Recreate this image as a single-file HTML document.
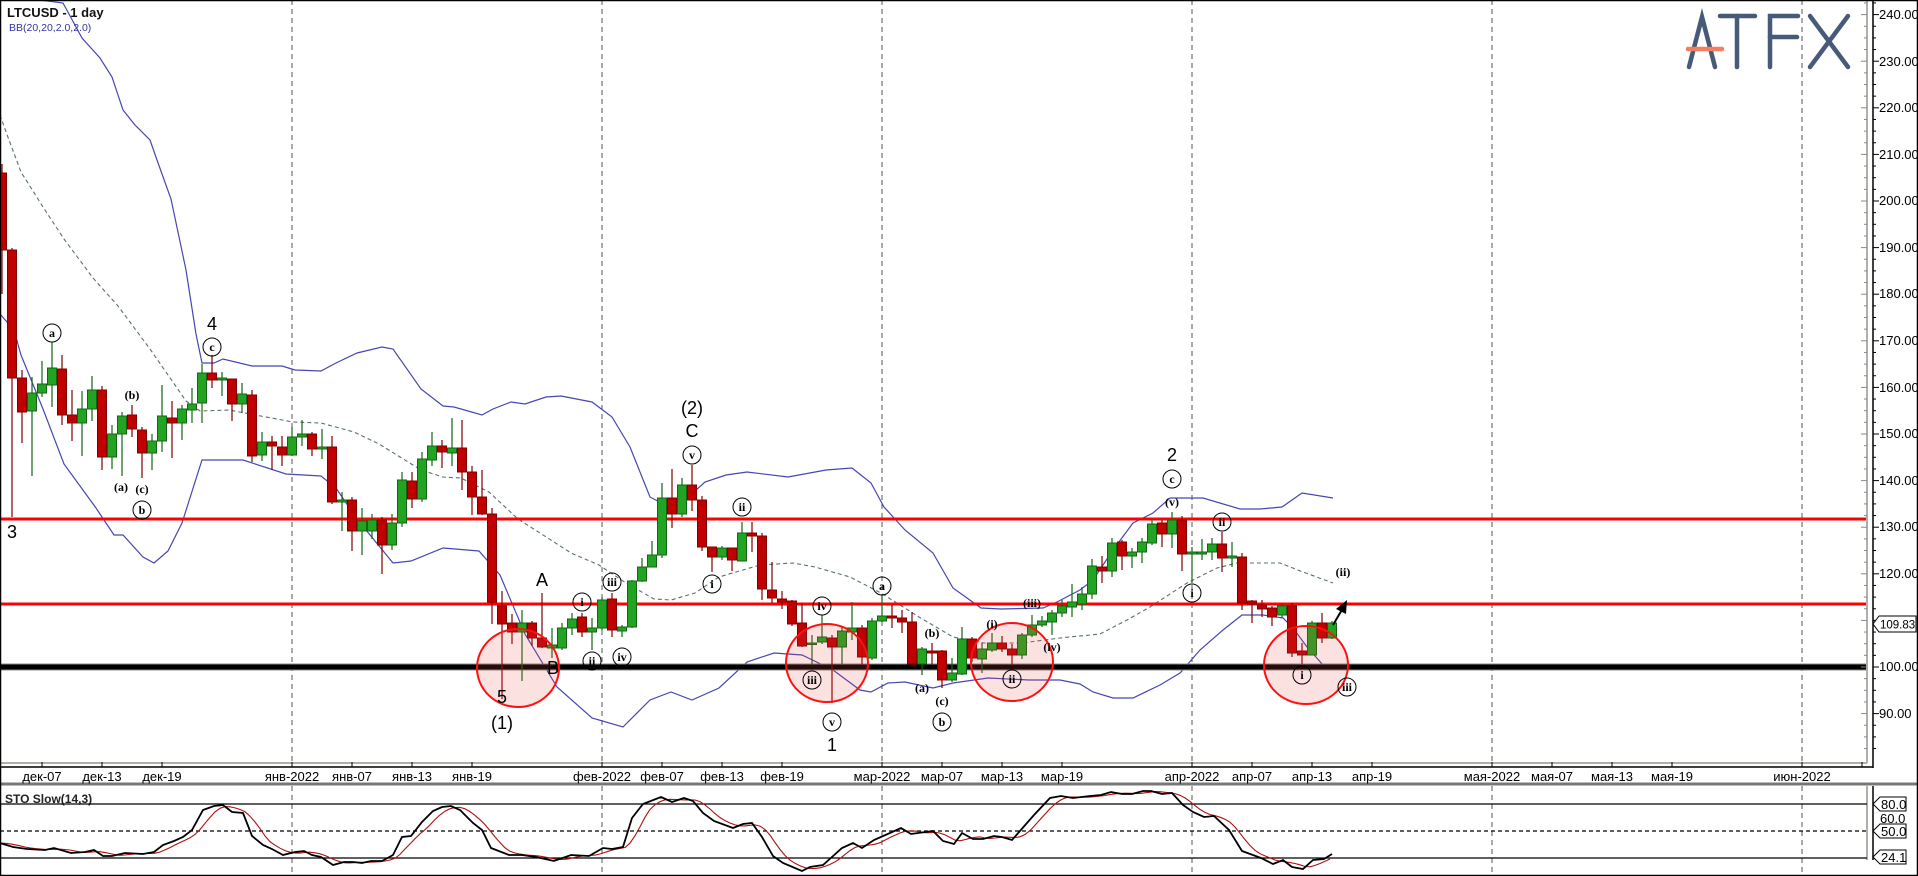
<!DOCTYPE html>
<html><head><meta charset="utf-8"><style>
html,body{margin:0;padding:0;background:#fff;}
svg{display:block;}
.ax{font-family:"Liberation Sans",sans-serif;font-size:13px;fill:#000;}
.wl{font-family:"Liberation Sans",sans-serif;font-size:18px;fill:#000;text-anchor:middle;}
.cl{font-family:"Liberation Serif",serif;font-size:12px;font-weight:bold;fill:#000;text-anchor:middle;}
</style></head><body>
<svg id="s" width="1918" height="876" viewBox="0 0 1918 876" xmlns="http://www.w3.org/2000/svg">
<rect x="0" y="0" width="1918" height="876" fill="#fff"/>
<g id="grid" stroke="#555" stroke-dasharray="5,4" stroke-width="1">
<line x1="292" y1="0" x2="292" y2="763"/><line x1="602" y1="0" x2="602" y2="763"/><line x1="882" y1="0" x2="882" y2="763"/><line x1="1192" y1="0" x2="1192" y2="763"/><line x1="1492" y1="0" x2="1492" y2="763"/><line x1="1802" y1="0" x2="1802" y2="763"/>
<line x1="292" y1="786" x2="292" y2="875"/><line x1="602" y1="786" x2="602" y2="875"/><line x1="882" y1="786" x2="882" y2="875"/><line x1="1192" y1="786" x2="1192" y2="875"/><line x1="1492" y1="786" x2="1492" y2="875"/><line x1="1802" y1="786" x2="1802" y2="875"/>
</g>
<g stroke="#475a78" stroke-width="4.5" stroke-linecap="round" fill="none">
<polyline points="1689,67 1702,17 1715,67"/>
<line x1="1720" y1="16" x2="1755" y2="16"/><line x1="1737" y1="16" x2="1737" y2="67"/>
<polyline points="1798,16 1770,16 1770,67"/><line x1="1770" y1="37" x2="1797" y2="37"/>
<line x1="1810" y1="16" x2="1848" y2="67"/><line x1="1848" y1="16" x2="1810" y2="67"/>
</g>
<line x1="1688" y1="49" x2="1722" y2="49" stroke="#f08060" stroke-width="4.5" stroke-linecap="round"/>
<g id="bands" fill="none"></g>
<line x1="0" y1="519" x2="1867" y2="519" stroke="#ff0000" stroke-width="3"/>
<line x1="0" y1="604" x2="1867" y2="604" stroke="#ff0000" stroke-width="3"/>
<line x1="0" y1="667" x2="1867" y2="667" stroke="#888" stroke-width="7"/>
<line x1="0" y1="667" x2="1867" y2="667" stroke="#000" stroke-width="5"/>
<g id="candles"></g>
<g fill="rgba(235,70,70,0.16)" stroke="#ff1010" stroke-width="2">
<ellipse cx="518" cy="668" rx="41" ry="39"/>
<ellipse cx="827" cy="663" rx="41" ry="39"/>
<ellipse cx="1012" cy="662" rx="41" ry="39"/>
<ellipse cx="1306" cy="665" rx="42" ry="39"/>
</g>
<line x1="1333" y1="625" x2="1343" y2="608" stroke="#000" stroke-width="2"/>
<polygon points="1347,600 1336,609 1346,614" fill="#000"/>
<g class="wl">
<text x="12" y="538">3</text><text x="212" y="330">4</text>
<text x="542" y="586">A</text><text x="553" y="674">B</text>
<text x="502" y="703">5</text><text x="502" y="729">(1)</text>
<text x="692" y="414">(2)</text><text x="692" y="437">C</text>
<text x="832" y="751">1</text><text x="1172" y="461">2</text>
</g>
<g class="cl" id="circ"></g>
<g class="cl">
<text x="132" y="399">(b)</text><text x="121" y="491">(a)</text><text x="142" y="493">(c)</text>
<text x="932" y="637">(b)</text><text x="922" y="692">(a)</text><text x="942" y="705">(c)</text>
<text x="992" y="628">(i)</text><text x="1032" y="607">(iii)</text><text x="1052" y="651">(iv)</text>
<text x="1172" y="506">(v)</text><text x="1343" y="576">(ii)</text>
</g>
<text x="7" y="17" font-family="Liberation Sans,sans-serif" font-size="13" font-weight="bold" fill="#111">LTCUSD - 1 day</text>
<text x="9" y="31" font-family="Liberation Sans,sans-serif" font-size="10.5" fill="#3333aa">BB(20,20,2.0,2.0)</text>
<line x1="0" y1="763" x2="1867" y2="763" stroke="#b0b0a8" stroke-width="2"/>
<line x1="1867" y1="0" x2="1867" y2="763" stroke="#b0b0a8" stroke-width="2"/>
<line x1="1867" y1="786" x2="1867" y2="860" stroke="#b0b0a8" stroke-width="2"/>
<line x1="1873" y1="0" x2="1873" y2="768" stroke="#000" stroke-width="1.5"/>
<line x1="1873" y1="786" x2="1873" y2="860" stroke="#000" stroke-width="1.5"/>
<line x1="0" y1="767" x2="1873" y2="767" stroke="#000" stroke-width="1.5"/>
<line x1="0" y1="784" x2="1918" y2="784" stroke="#777" stroke-width="3"/>
<rect x="0.5" y="0.5" width="1917" height="875" fill="none" stroke="#000" stroke-width="1.5"/>
<g id="ticks" stroke="#000" stroke-width="1"></g>
<g class="ax" text-anchor="middle">
<text x="42" y="781">дек-07</text><text x="102" y="781">дек-13</text><text x="162" y="781">дек-19</text>
<text x="292" y="781">янв-2022</text><text x="352" y="781">янв-07</text><text x="412" y="781">янв-13</text><text x="472" y="781">янв-19</text>
<text x="602" y="781">фев-2022</text><text x="662" y="781">фев-07</text><text x="722" y="781">фев-13</text><text x="782" y="781">фев-19</text>
<text x="882" y="781">мар-2022</text><text x="942" y="781">мар-07</text><text x="1002" y="781">мар-13</text><text x="1062" y="781">мар-19</text>
<text x="1192" y="781">апр-2022</text><text x="1252" y="781">апр-07</text><text x="1312" y="781">апр-13</text><text x="1372" y="781">апр-19</text>
<text x="1492" y="781">мая-2022</text><text x="1552" y="781">мая-07</text><text x="1612" y="781">мая-13</text><text x="1672" y="781">мая-19</text>
<text x="1802" y="781">июн-2022</text>
</g>
<g class="ax" id="plab">
<text x="1879" y="19">240.00</text><text x="1879" y="66">230.00</text><text x="1879" y="112">220.00</text><text x="1879" y="159">210.00</text><text x="1879" y="205">200.00</text><text x="1879" y="252">190.00</text><text x="1879" y="298">180.00</text><text x="1879" y="345">170.00</text><text x="1879" y="392">160.00</text><text x="1879" y="438">150.00</text><text x="1879" y="485">140.00</text><text x="1879" y="531">130.00</text><text x="1879" y="578">120.00</text><text x="1879" y="671">100.00</text><text x="1879" y="718">90.00</text>
</g>
<polygon points="1873,624 1879,616 1916,616 1916,632 1879,632" fill="#fff" stroke="#000"/>
<text x="1880" y="628.5" font-family="Liberation Sans,sans-serif" font-size="11.5" fill="#000">109.83</text>
<text x="5" y="803" font-family="Liberation Sans,sans-serif" font-size="12" font-weight="bold" fill="#222">STO Slow(14,3)</text>
<line x1="0" y1="804" x2="1867" y2="804" stroke="#000" stroke-width="1.2"/>
<line x1="0" y1="831" x2="1867" y2="831" stroke="#000" stroke-width="1.2" stroke-dasharray="4,3"/>
<line x1="0" y1="858" x2="1867" y2="858" stroke="#000" stroke-width="1.2"/>
<g id="sto" fill="none"></g>
<text x="1880" y="823" class="ax" font-size="12">60.0</text>
<polygon points="1873,804 1880,797 1906,797 1906,811 1880,811" fill="#fff" stroke="#000"/>
<text x="1881" y="809" class="ax" font-size="12">80.0</text>
<polygon points="1873,831 1880,824 1906,824 1906,838 1880,838" fill="#fff" stroke="#000"/>
<text x="1881" y="836" class="ax" font-size="12">50.0</text>
<polygon points="1873,857 1880,850 1906,850 1906,864 1880,864" fill="#fff" stroke="#000"/>
<text x="1881" y="862" class="ax" font-size="12">24.1</text>
</svg>
<script>
var NS="http://www.w3.org/2000/svg";
function el(p,t,a){var e=document.createElementNS(NS,t);for(var k in a)e.setAttribute(k,a[k]);p.appendChild(e);return e;}
var C=[[173,250,164,294,0],[250,378,248,517,0],[378,412,370,443,0],[393,411,377,476,1],[384,393,361,397,1],[368,385,342,407,1],[369,415,355,425,0],[415,423,390,441,0],[409,423,391,456,1],[390,409,376,421,1],[390,457,386,470,0],[434,457,425,469,1],[416,434,412,476,1],[415,429,405,437,0],[430,453,427,478,0],[441,453,434,470,1],[416,441,385,452,1],[418,423,401,458,0],[409,423,405,440,1],[404,410,388,423,1],[373,403,364,423,1],[373,380,355,388,0],[378,380,372,396,1],[379,404,379,421,0],[394,404,383,413,1],[395,456,390,462,0],[442,455,432,461,1],[442,446,436,470,0],[447,455,436,466,0],[437,455,427,456,1],[434,437,420,446,1],[434,449,432,456,0],[447,449,429,459,1],[447,502,436,504,0],[500,502,492,531,1],[500,531,497,551,0],[521,531,508,555,1],[520,531,514,539,1],[520,545,517,574,0],[523,545,514,550,1],[480,523,472,527,1],[481,499,472,508,0],[459,499,452,502,1],[446,460,432,466,1],[446,452,440,468,0],[448,453,418,466,1],[448,472,420,490,0],[472,497,466,515,0],[497,514,470,515,0],[514,602,508,624,0],[606,624,591,699,0],[623,632,614,644,0],[623,632,610,681,1],[623,638,621,646,0],[638,647,593,648,0],[645,648,628,658,1],
[628,648,623,650,1],[619,628,613,635,1],[617,632,613,637,0],[628,632,618,650,1],[600,628,597,630,1],[599,630,593,637,0],[627,631,625,637,1],[581,627,580,628,1],[567,581,558,582,1],[555,567,541,567,1],[498,555,483,558,1],[498,514,469,528,0],[485,514,478,517,1],[485,500,465,511,0],[500,547,496,551,0],[547,557,547,572,0],[548,557,546,560,1],[548,560,548,571,0],[533,561,522,561,1],[533,536,522,552,0],[536,589,533,600,0],[590,598,562,603,0],[599,602,591,609,0],[601,624,600,626,0],[623,646,603,647,0],[643,644,635,665,1],[637,642,615,644,1],[638,647,635,703,0],[631,647,627,664,1],[628,632,602,640,1],[628,657,625,665,0],[621,658,618,660,1],[616,621,595,622,1],[616,618,605,628,0],[618,622,610,633,0],[622,664,612,667,0],[649,664,647,675,1],[651,653,643,665,0],[651,680,650,688,0],[673,680,658,682,1],[639,674,627,675,1],[639,658,637,662,0],[649,659,643,673,1],[643,650,633,652,1],[643,649,636,652,0],[649,655,644,665,0],[635,655,633,659,1],[625,635,615,637,1],[621,625,616,627,1],[613,622,610,635,1],[606,613,600,617,1],
[602,607,584,617,1],[594,604,587,610,1],[566,594,559,599,1],[567,571,556,583,0],[543,571,538,577,1],[542,556,540,570,0],[552,556,548,568,1],[542,552,538,563,1],[524,543,520,545,1],[523,534,520,547,0],[520,534,512,548,1],[520,554,516,571,0],[552,554,547,583,1],[552,554,539,560,1],[544,552,538,560,1],[544,558,532,572,0],[556,558,542,567,1],[557,603,553,610,0],[601,604,600,623,0],[605,609,600,617,0],[608,617,606,626,0],[606,615,603,618,1],[606,653,603,657,0],[651,655,643,664,0],[623,655,621,655,1],[623,638,613,643,0],[623,638,621,639,1]];
var g=document.getElementById('candles');
C.forEach(function(c,k){var x=2+10*k;var fc=c[4]?'#22a422':'#c00000',sc=c[4]?'#146414':'#800000';
el(g,'line',{x1:x,y1:c[2],x2:x,y2:c[3],stroke:sc,'stroke-width':1.2});
el(g,'rect',{x:x-4.5,y:c[0],width:9,height:Math.max(1.5,c[1]-c[0]),fill:fc,stroke:sc,'stroke-width':1});});
var UP=[[40,0],[63,3],[82,38],[100,58],[112,77],[123,110],[135,125],[150,140],[157,160],[171,199],[186,270],[196,334],[202,363],[214,363],[223,359],[252,366],[282,366],[295,370],[321,371],[336,363],[357,353],[382,347],[393,349],[421,389],[443,406],[454,407],[482,415],[493,409],[511,402],[525,404],[546,397],[561,396],[592,402],[612,417],[630,447],[650,497],[671,508],[685,500],[705,482],[726,475],[747,472],[788,477],[826,470],[852,468],[871,483],[884,507],[905,530],[933,553],[953,588],[981,608],[1001,609],[1043,608],[1057,602],[1080,590],[1093,580],[1113,550],[1133,523],[1153,513],[1170,498],[1203,498],[1240,509],[1260,509],[1282,507],[1302,493],[1333,498]];
var MID=[[0,115],[9,140],[21,172],[43,207],[64,239],[93,278],[118,306],[150,349],[186,401],[200,411],[229,410],[250,414],[293,422],[321,423],[354,432],[379,444],[421,470],[443,477],[461,478],[489,492],[518,519],[540,533],[571,553],[599,565],[626,583],[654,599],[671,600],[695,593],[719,577],[760,565],[793,563],[815,567],[850,577],[881,593],[919,617],[953,637],[984,643],[1022,643],[1060,638],[1100,634],[1127,620],[1150,607],[1187,583],[1217,568],[1237,563],[1280,563],[1303,572],[1333,583]];
var LO=[[0,314],[14,330],[21,355],[43,409],[64,464],[96,508],[114,535],[123,535],[143,557],[154,563],[168,551],[182,523],[202,460],[243,460],[286,474],[321,476],[336,488],[357,519],[393,563],[411,561],[443,548],[479,551],[500,575],[525,634],[557,687],[592,718],[623,727],[650,700],[671,692],[692,700],[719,688],[747,662],[774,653],[802,655],[833,670],[860,690],[871,692],[888,683],[905,682],[933,688],[953,683],[988,678],[1029,680],[1060,680],[1080,684],[1093,692],[1113,698],[1133,698],[1160,685],[1180,673],[1200,650],[1223,630],[1242,615],[1263,615],[1283,618],[1293,628],[1307,647],[1323,665]];
var b=document.getElementById('bands');
function pl(p,a,st,w,d){var o={points:a.map(function(q){return q.join(',')}).join(' '),stroke:st,'stroke-width':w,fill:'none'};if(d)o['stroke-dasharray']=d;el(p,'polyline',o);}
pl(b,UP,'#4646b4',1.2);pl(b,MID,'#5a7070',1.1,'4,3');pl(b,LO,'#4646b4',1.2);
var ST=[[0,843],[13,847],[27,849],[45,850],[54,848],[71,853],[85,852],[94,850],[103,856],[112,856],[125,853],[143,854],[154,852],[163,845],[174,841],[183,837],[192,830],[203,810],[214,806],[223,805],[232,812],[243,813],[252,836],[263,845],[272,849],[283,855],[295,852],[304,851],[312,855],[321,857],[333,865],[344,862],[353,862],[362,863],[371,861],[382,861],[393,855],[402,837],[411,836],[422,822],[433,811],[442,807],[451,806],[460,810],[473,823],[482,830],[491,848],[509,855],[522,855],[536,857],[545,859],[554,861],[571,855],[589,856],[603,848],[612,849],[623,847],[632,818],[643,804],[661,797],[672,802],[684,798],[693,801],[703,813],[714,821],[733,828],[743,824],[752,823],[762,837],[773,856],[783,863],[802,871],[810,867],[823,865],[842,848],[853,843],[862,848],[874,840],[890,833],[901,828],[911,834],[933,831],[943,841],[954,844],[962,833],[973,839],[983,839],[994,836],[1002,837],[1012,840],[1034,815],[1050,798],[1061,796],[1073,798],[1090,796],[1101,795],[1111,792],[1122,794],[1132,794],[1143,791],[1151,791],[1162,794],[1172,793],[1183,805],[1193,812],[1204,817],[1214,816],[1229,830],[1242,851],[1261,858],[1273,864],[1283,860],[1292,867],[1303,869],[1313,860],[1324,859],[1332,854]];
function at(x){for(var i=1;i<ST.length;i++){if(ST[i][0]>=x){var a=ST[i-1],c=ST[i];return a[1]+(c[1]-a[1])*(x-a[0])/((c[0]-a[0])||1);}}return ST[ST.length-1][1];}
var RD=[];for(var x=0;x<=1332;x+=5){var s=0,n=0;for(var j=0;j<=20;j+=2){s+=at(Math.max(0,x-j));n++;}RD.push([x,(s/n).toFixed(1)]);}
var so=document.getElementById('sto');pl(so,RD,'#b01010',1.1);pl(so,ST,'#000',1.8);
var CI=[["a",52,333],["c",212,347],["b",142,510],["i",582,602],["ii",592,661],["iii",612,582],["iv",622,657],["v",692,455],["i",712,584],["ii",742,507],["iv",822,606],["iii",812,680],["v",832,722],["a",882,586],["b",942,722],["ii",1012,679],["c",1172,479],["ii",1222,522],["i",1192,593],["i",1302,675],["iii",1347,687]];
var cg=document.getElementById('circ');
CI.forEach(function(c){el(cg,'circle',{cx:c[1],cy:c[2],r:9,fill:'none',stroke:'#000','stroke-width':1});var t=el(cg,'text',{x:c[1],y:c[2]+4});t.textContent=c[0];});
var tk=document.getElementById('ticks');
[42,102,162,292,352,412,472,602,662,722,782,882,942,1002,1062,1192,1252,1312,1372,1492,1552,1612,1672,1802,1862].forEach(function(x){el(tk,'line',{x1:x,y1:762,x2:x,y2:767});});
for(var p=80;p<=245;p+=2.5){var y=667-(p-100)*4.66;if(y<2||y>760)continue;var len=(Math.abs(p%10)<0.01)?6:3;el(tk,'line',{x1:1873,y1:y,x2:1873+len,y2:y});el(tk,'line',{x1:1867,y1:y,x2:1867-len,y2:y,stroke:'#888'});}
</script>
</body></html>
